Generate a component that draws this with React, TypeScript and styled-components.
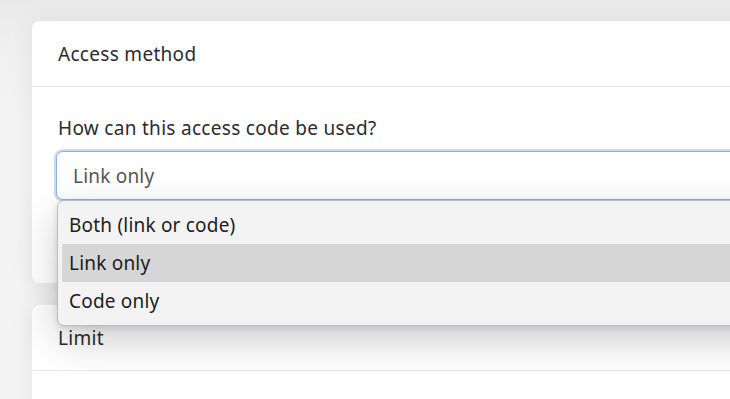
import styled, { createGlobalStyle } from 'styled-components'

const GlobalStyle = createGlobalStyle`
    html, body {
        margin: 0;
        padding: 0;
        background: #f4f4f4;
        overflow: hidden;
    }
    body {
        font-family: "Noto Sans", "Open Sans", sans-serif;
        color: #2c2c2c;
    }
`;

const StyledPage = styled.div`
    width: 730px;
    height: 399px;
    overflow: hidden;
    padding: 21px 0 0 32px;
    box-sizing: border-box;
    display: flex;
    flex-direction: column;
    gap: 22px;
    background: linear-gradient(180deg, #e9e9e9 0px, #efefef 40px, #f4f4f4 120px);
`;

const StyledCard = styled.section`
    width: 760px;
    flex-shrink: 0;
    background: #ffffff;
    border-radius: 8px;
    box-shadow: 0 2px 24px rgba(0, 0, 0, 0.07);
`;

const StyledCardHeader = styled.div`
    height: 65px;
    display: flex;
    align-items: center;
    padding: 0 26px;
    border-bottom: 1px solid #e8e8e8;
    font-size: 19px;
    letter-spacing: 0.3px;
`;

const StyledCardBody = styled.div<{ $tall?: boolean }>`
    position: relative;
    padding: ${({ $tall }) => ($tall ? '28px 0 83px 24px' : '40px 24px')};
`;

const StyledLabel = styled.div`
    font-size: 19px;
    line-height: 26px;
    margin: 0 0 10px 2px;
    letter-spacing: 0.3px;
`;

const StyledSelect = styled.div`
    height: 47px;
    display: flex;
    align-items: center;
    padding: 0 16px;
    border: 1px solid #8eb2de;
    border-radius: 7px;
    box-shadow: 0 0 0 2px #ccdcf0;
    background: #ffffff;
    color: #555555;
    font-size: 19px;
    letter-spacing: 0.2px;
`;

const StyledMenu = styled.ul`
    position: absolute;
    top: 113px;
    left: 25px;
    right: 0;
    margin: 0;
    padding: 5px 4px;
    list-style: none;
    background: #f3f3f3;
    border: 1px solid #b9bcc0;
    border-radius: 7px;
    box-shadow: 0 14px 40px rgba(0, 0, 0, 0.2), 0 2px 6px rgba(0, 0, 0, 0.12);
    font-size: 19px;
    letter-spacing: 0.2px;
    color: #1c1c1c;
    z-index: 2;
`;

const StyledOption = styled.li<{ $active?: boolean }>`
    height: 38px;
    display: flex;
    align-items: center;
    padding: 0 7px;
    background: ${({ $active }) => ($active ? '#d6d6d6' : 'transparent')};
`;

const options = ['Both (link or code)', 'Link only', 'Code only'];

const App = () => {
    const selected = 'Link only';
    return (
        <>
            <GlobalStyle />
            <StyledPage>
                <StyledCard>
                    <StyledCardHeader>Access method</StyledCardHeader>
                    <StyledCardBody $tall>
                        <StyledLabel>How can this access code be used?</StyledLabel>
                        <StyledSelect>{selected}</StyledSelect>
                        <StyledMenu>
                            {options.map((option) => (
                                <StyledOption key={option} $active={option === selected}>
                                    {option}
                                </StyledOption>
                            ))}
                        </StyledMenu>
                    </StyledCardBody>
                </StyledCard>
                <StyledCard>
                    <StyledCardHeader>Limit</StyledCardHeader>
                    <StyledCardBody />
                </StyledCard>
            </StyledPage>
        </>
    )
}

export default App
